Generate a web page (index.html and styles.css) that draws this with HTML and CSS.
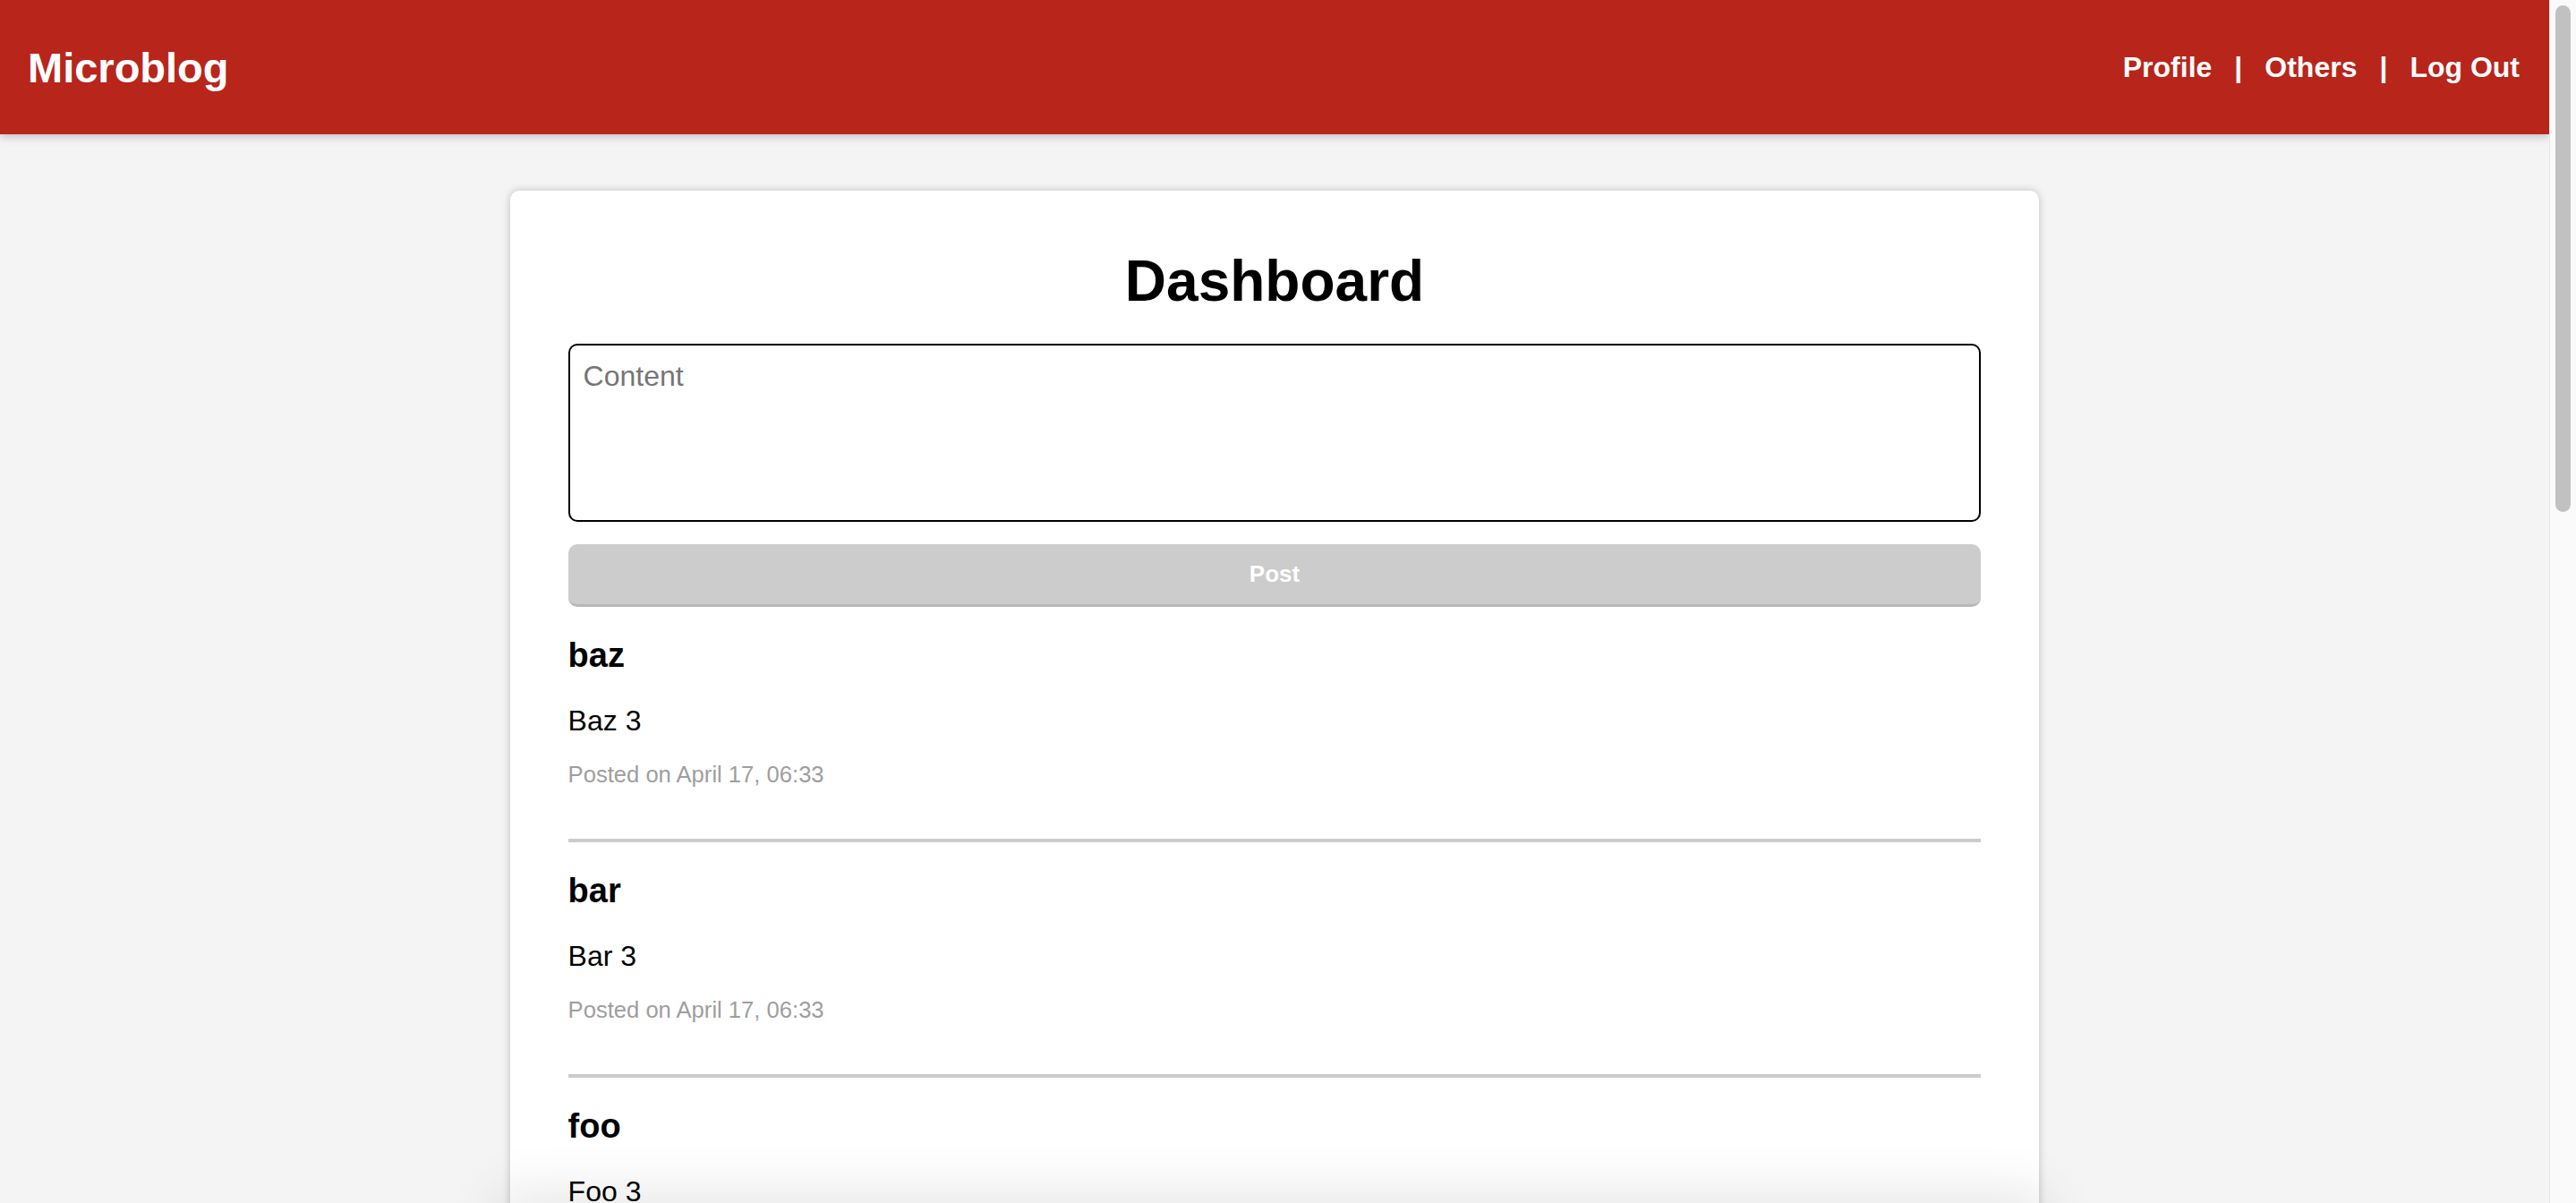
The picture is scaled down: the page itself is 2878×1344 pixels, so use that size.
FILE: index.html
```html
<!DOCTYPE html>
<html lang="en">
<head>
<meta charset="utf-8">
<title>Microblog</title>
<link rel="stylesheet" href="styles.css">
</head>
<body>
<header class="topbar">
  <a class="brand" href="#">Microblog</a>
  <nav class="nav">
    <a href="#">Profile</a>
    <span class="sep">|</span>
    <a href="#">Others</a>
    <span class="sep">|</span>
    <a href="#">Log Out</a>
  </nav>
</header>
<main class="card">
  <h1 class="title">Dashboard</h1>
  <form class="composer">
    <textarea class="composer-input" placeholder="Content"></textarea>
    <button class="composer-btn" type="button" disabled>Post</button>
  </form>
  <section class="feed">
    <article class="post">
      <h3 class="post-user">baz</h3>
      <p class="post-body">Baz 3</p>
      <p class="post-meta">Posted on April 17, 06:33</p>
    </article>
    <article class="post">
      <h3 class="post-user">bar</h3>
      <p class="post-body">Bar 3</p>
      <p class="post-meta">Posted on April 17, 06:33</p>
    </article>
    <article class="post">
      <h3 class="post-user">foo</h3>
      <p class="post-body">Foo 3</p>
      <p class="post-meta">Posted on April 17, 06:33</p>
    </article>
  </section>
</main>
<div class="bottom-shade"></div>
<div class="scrollbar" aria-hidden="true"><div class="scrollbar-thumb"></div></div>
</body>
</html>
```

FILE: styles.css
```css
html {
  background: #f4f4f4;
}

body {
  margin: 0 30px 0 0;
  background: #f4f4f4;
  font-family: "Liberation Sans", Arial, sans-serif;
  color: #000;
}

.topbar {
  height: 150px;
  box-sizing: border-box;
  padding: 0 33px 0 31px;
  background: #b8251b;
  display: flex;
  align-items: center;
  justify-content: space-between;
  box-shadow: 0 2px 10px rgba(0, 0, 0, 0.25);
  position: relative;
  z-index: 2;
}

.brand {
  color: #fff;
  text-decoration: none;
  font-weight: bold;
  font-size: 47px;
}

.nav {
  display: flex;
  align-items: center;
  gap: 25px;
  font-weight: bold;
  font-size: 32px;
  color: #fff;
}

.nav a {
  color: #fff;
  text-decoration: none;
}

.card {
  display: block;
  width: 60%;
  box-sizing: border-box;
  margin: 63px auto 64px;
  padding: 64px 65px;
  background: #fff;
  border-radius: 10px;
  box-shadow: 0 0 10px rgba(0, 0, 0, 0.22);
}

.title {
  margin: 0 0 33px;
  text-align: center;
  font-size: 64px;
  font-weight: bold;
}

.composer {
  margin: 0;
}

.composer-input {
  display: block;
  width: 100%;
  height: 199px;
  box-sizing: border-box;
  border: 2px solid #000;
  border-radius: 10px;
  padding: 16px 15px;
  font-family: "Liberation Sans", Arial, sans-serif;
  font-size: 32px;
  resize: none;
  outline: none;
  background: #fff;
}

.composer-input::placeholder {
  color: #757575;
}

.composer-btn {
  display: block;
  width: 100%;
  height: 70px;
  margin-top: 25px;
  border: none;
  border-bottom: 3px solid #b8b8b8;
  border-radius: 10px;
  background: #cccccc;
  color: #fff;
  font-family: "Liberation Sans", Arial, sans-serif;
  font-weight: bold;
  font-size: 26px;
  padding: 0;
}

.feed {
  margin-top: 33px;
}

.post {
  padding-bottom: 57px;
  border-bottom: 4px solid #cccccc;
  margin-bottom: 33px;
}

.post-user {
  margin: 0 0 33px;
  font-size: 38px;
  font-weight: bold;
}

.post-body {
  margin: 0 0 27px;
  font-size: 32px;
}

.post-meta {
  margin: 0;
  font-size: 25.6px;
  color: #9e9e9e;
}

.bottom-shade {
  position: fixed;
  left: 20%;
  width: calc(60% - 18px);
  margin-left: -9px;
  bottom: -40px;
  height: 40px;
  box-shadow: 0 0 60px 12px rgba(0, 0, 0, 0.1);
  background: #e8e8e8;
  z-index: 3;
}

.scrollbar {
  position: fixed;
  top: 0;
  right: 0;
  bottom: 0;
  width: 29px;
  background: #fafafa;
  border-left: 1px solid #e6e6e6;
  z-index: 5;
}

.scrollbar-thumb {
  margin: 6px 0 0 6px;
  width: 17px;
  height: 566px;
  border-radius: 9px;
  background: #c1c1c1;
}
```
